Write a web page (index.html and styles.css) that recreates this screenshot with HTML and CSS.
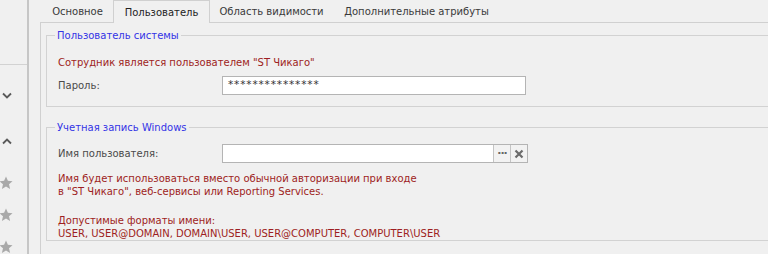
FILE: index.html
```html
<!DOCTYPE html>
<html lang="ru">
<head>
<meta charset="utf-8">
<title>Пользователь</title>
<link rel="stylesheet" href="styles.css">
</head>
<body>
<div class="app">
  <aside class="sidebar">
    <div class="side-top"></div>
    <div class="side-btn down">
      <svg width="10" height="7" viewBox="0 0 10 7"><path d="M1 1.5 L5 5.5 L9 1.5" fill="none" stroke="#5a5a5a" stroke-width="1.8"/></svg>
    </div>
    <div class="side-btn up">
      <svg width="10" height="7" viewBox="0 0 10 7"><path d="M1 5.5 L5 1.5 L9 5.5" fill="none" stroke="#5a5a5a" stroke-width="1.8"/></svg>
    </div>
    <div class="stars">
      <svg class="star" width="14" height="14" viewBox="0 0 14 14"><path d="M7 0.5 L8.9 4.8 L13.5 5.2 L10 8.3 L11.1 12.9 L7 10.5 L2.9 12.9 L4 8.3 L0.5 5.2 L5.1 4.8 Z" fill="#a9a9a9"/></svg>
      <svg class="star" width="14" height="14" viewBox="0 0 14 14"><path d="M7 0.5 L8.9 4.8 L13.5 5.2 L10 8.3 L11.1 12.9 L7 10.5 L2.9 12.9 L4 8.3 L0.5 5.2 L5.1 4.8 Z" fill="#a9a9a9"/></svg>
      <svg class="star" width="14" height="14" viewBox="0 0 14 14"><path d="M7 0.5 L8.9 4.8 L13.5 5.2 L10 8.3 L11.1 12.9 L7 10.5 L2.9 12.9 L4 8.3 L0.5 5.2 L5.1 4.8 Z" fill="#a9a9a9"/></svg>
    </div>
  </aside>
  <main class="panel">
    <div class="tabs">
      <div class="tab t1">Основное</div>
      <div class="tab t2 active">Пользователь</div>
      <div class="tab t3">Область видимости</div>
      <div class="tab t4">Дополнительные атрибуты</div>
    </div>
    <div class="page">
      <fieldset class="group g1">
        <legend>Пользователь системы</legend>
        <div class="note">Сотрудник является пользователем "ST Чикаго"</div>
        <div class="row">
          <label class="lbl">Пароль:</label>
          <div class="input pwd">***************</div>
        </div>
      </fieldset>
      <fieldset class="group g2">
        <legend>Учетная запись Windows</legend>
        <div class="row">
          <label class="lbl">Имя пользователя:</label>
          <div class="combo">
            <div class="input user"></div>
            <div class="btn dots">···</div>
            <div class="btn clear">
              <svg width="10" height="10" viewBox="0 0 10 10"><path d="M1.5 1.5 L8.5 8.5 M8.5 1.5 L1.5 8.5" stroke="#6b6b6b" stroke-width="2.2"/></svg>
            </div>
          </div>
        </div>
        <div class="note block">Имя будет использоваться вместо обычной авторизации при входе<br>в "ST Чикаго", веб-сервисы или Reporting Services.</div>
        <div class="note block formats">Допустимые форматы имени:<br>USER, USER@DOMAIN, DOMAIN\USER, USER@COMPUTER, COMPUTER\USER</div>
      </fieldset>
    </div>
  </main>
</div>
</body>
</html>
```
FILE: styles.css
```css
* { box-sizing: border-box; }
html, body {
  margin: 0;
  padding: 0;
  background: #f0f0f0;
  overflow: hidden;
}
body {
  font-family: "DejaVu Sans", Tahoma, sans-serif;
  font-size: 10px;
  color: #444;
  width: 768px;
  height: 254px;
}
.app {
  display: flex;
  height: 254px;
  width: 900px;
}
.sidebar {
  width: 29px;
  flex: none;
  border-right: 2px solid #c6c6c6;
  display: flex;
  flex-direction: column;
  overflow: hidden;
}
.side-top {
  height: 71px;
  border-bottom: 1px solid #d2d2d2;
}
.side-btn {
  height: 48px;
  display: flex;
  align-items: center;
  padding-left: 2px;
}
.side-btn.down { margin-top: 8px; }
.side-btn.up { padding-top: 4px; }
.stars {
  display: flex;
  flex-direction: column;
  gap: 18px;
  margin-top: 14px;
  margin-left: -1px;
}
.star { display: block; }
.panel {
  flex: 1;
  margin-left: 11px;
  display: flex;
  flex-direction: column;
}
.tabs {
  display: flex;
  height: 23px;
  padding-left: 2px;
  position: relative;
  z-index: 1;
}
.tab {
  height: 22px;
  padding: 5px 0 0;
  text-align: center;
  color: #3a3a3a;
  font-size: 10px;
  margin-top: 1px;
}
.t1 { width: 71px; }
.t2 { width: 97px; }
.t3 { width: 123px; }
.t4 { width: 167px; }
.tab.active {
  margin-top: 0;
  height: 23px;
  padding-top: 6px;
  background: #f0f0f0;
  border: 1px solid #d0d0d0;
  border-bottom: none;
  color: #222;
}
.page {
  flex: 1;
  margin-top: -1px;
  border-top: 1px solid #d0d0d0;
  border-left: 1px solid #d0d0d0;
  padding: 6px 0 0 5px;
}
.group {
  margin: 0;
  border: 1px solid #d2d2d2;
  padding: 0 0 0 11px;
  min-width: 0;
}
.group legend {
  color: #3434e6;
  padding: 0 2px;
  margin-left: -3px;
  font-size: 10px;
  line-height: 13px;
}
.g1 { height: 78px; padding-top: 14px; }
.g2 { height: 120px; margin-top: 14px; padding-top: 3px; }
.note {
  color: #9e1e22;
  font-size: 10px;
  line-height: 13px;
}
.row {
  display: flex;
  align-items: center;
  height: 19px;
  margin-top: 7px;
}
.lbl {
  width: 164px;
  color: #4a4a4a;
  font-size: 10px;
}
.input {
  height: 19px;
  background: #fff;
  border: 1px solid #b4b4b4;
  padding: 0 0 0 5px;
  font-size: 10.5px;
  line-height: 15px;
  color: #333;
  letter-spacing: 0.85px;
}
.pwd { width: 304px; }
.combo {
  display: flex;
  height: 19px;
  border: 1px solid #b4b4b4;
}
.combo .input {
  border: none;
  width: 270px;
  height: 17px;
}
.btn {
  width: 17px;
  height: 17px;
  border-left: 1px solid #c4c4c4;
  background: #f2f2f2;
  display: flex;
  align-items: center;
  justify-content: center;
  color: #666;
  font-size: 11px;
  font-weight: bold;
}
.btn.dots { letter-spacing: -1px; }
.note.block { margin-top: 9px; }
.note.formats { margin-top: 16px; line-height: 13px; }
```
